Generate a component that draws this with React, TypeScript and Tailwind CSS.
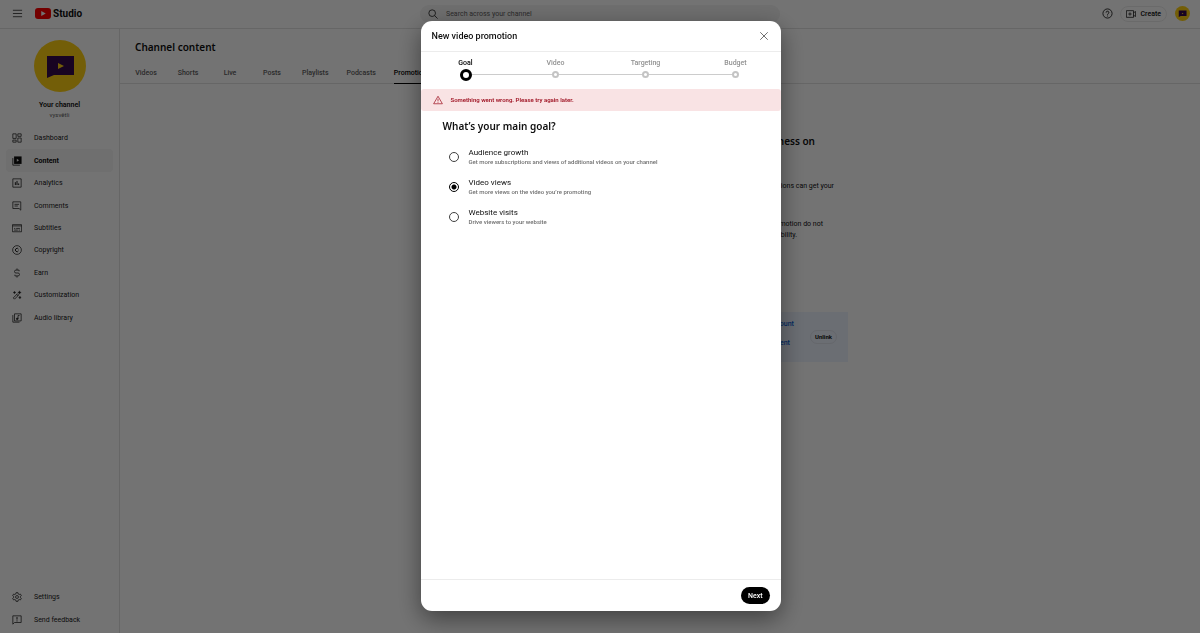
import { useState } from "react";
import type { ReactNode } from "react";

function Icon({ children, className = "size-[10px]" }: { children: ReactNode; className?: string }) {
  return (
    <svg viewBox="0 0 24 24" fill="none" stroke="currentColor" strokeWidth="1.8" className={`shrink-0 ${className}`} aria-hidden="true">
      {children}
    </svg>
  );
}

const navItems: { label: string; icon: ReactNode }[] = [
  {
    label: "Dashboard",
    icon: <path d="M2 2h8v11H2zM14 2h8v6h-8zM2 17h8v5H2zM14 12h8v10h-8z" />,
  },
  {
    label: "Content",
    icon: (
      <>
        <path d="M2 5v17h17" />
        <path d="M5 1h18v18H5z" fill="currentColor" stroke="none" />
        <path d="M11.500 6.500v7l5.500-3.500z" fill="#e8e8e8" stroke="none" />
      </>
    ),
  },
  {
    label: "Analytics",
    icon: (
      <>
        <path d="M2 2h20v20H2z" />
        <path d="M8 10v7M12 7v10M16 13v4" strokeWidth="2.400" />
      </>
    ),
  },
  {
    label: "Comments",
    icon: (
      <>
        <path d="M2 2h19v20l-4-4H2z" />
        <path d="M6 8h11M6 12h8" />
      </>
    ),
  },
  {
    label: "Subtitles",
    icon: (
      <>
        <path d="M1 4h22v17H1zM1 7h22" />
        <path d="M5 13h3M10 13h9M5 17h9M16 17h3" />
      </>
    ),
  },
  {
    label: "Copyright",
    icon: (
      <>
        <circle cx="12" cy="12" r="10.500" />
        <path d="M15.500 10a4 4 0 1 0 0 4" strokeWidth="2.400" />
      </>
    ),
  },
  {
    label: "Earn",
    icon: <path d="M17 8V5H9.500a3.500 3.500 0 0 0 0 7h5a3.500 3.500 0 0 1 0 7H7v-3M12 1v4M12 19v4" />,
  },
  {
    label: "Customization",
    icon: (
      <>
        <path d="M3 19 13 9l3 3L6 22zM11 11l3 3" />
        <path d="m18 2 1 3 3 1-3 1-1 3-1-3-3-1 3-1zM6 3l1 2 2 1-2 1-1 2-1-2-2-1 2-1zM19 15l1 2 2 1-2 1-1 2-1-2-2-1 2-1z" fill="currentColor" strokeWidth="1" />
      </>
    ),
  },
  {
    label: "Audio library",
    icon: (
      <>
        <path d="M6 2h16v17H6zM2 5v17h16" />
        <circle cx="12.500" cy="14" r="2" fill="currentColor" />
        <path d="M14.500 14V6H18" />
      </>
    ),
  },
];

const footerItems: { label: string; icon: ReactNode }[] = [
  {
    label: "Settings",
    icon: (
      <>
        <path d="M9.800 1.500h4.400l.7 3.300 2.100 1.200 3.200-1 2.200 3.800-2.500 2.200v2l2.500 2.200-2.200 3.800-3.200-1-2.100 1.200-.7 3.300H9.800l-.7-3.300L7 18l-3.200 1-2.200-3.800L4.100 13v-2L1.600 8.800 3.800 5 7 6l2.100-1.200z" />
        <circle cx="12" cy="12" r="3.500" />
      </>
    ),
  },
  {
    label: "Send feedback",
    icon: (
      <>
        <path d="M2 2h20v16H6l-4 4z" />
        <path d="M12 5v6M12 13v2.500" strokeWidth="2.400" />
      </>
    ),
  },
];

const tabs = ["Videos", "Shorts", "Live", "Posts", "Playlists", "Podcasts", "Promotions"];
const steps = ["Goal", "Video", "Targeting", "Budget"];
const goals = [
  { id: "audience", title: "Audience growth", text: "Get more subscriptions and views of additional videos on your channel" },
  { id: "views", title: "Video views", text: "Get more views on the video you’re promoting" },
  { id: "website", title: "Website visits", text: "Drive viewers to your website" },
];

function Avatar({ className }: { className: string }) {
  return (
    <svg viewBox="0 0 52 52" className={className} aria-hidden="true">
      <circle cx="26" cy="26" r="26" fill="#ffd013" />
      <path d="M13 16h27v19H20l-7 3z" fill="#350b4d" />
      <path d="M24 23v6l6-3z" fill="#ffd013" />
    </svg>
  );
}

function Header() {
  return (
    <header className="grid h-[29px] shrink-0 grid-cols-[1fr_360px_1fr] items-center border-b border-[#e2e2e2] pb-px">
      <div className="flex items-center pl-3">
        <button type="button" aria-label="Menu" className="text-[#303030]">
          <Icon className="size-[11px]">
            <path d="M2 5h20M2 12h20M2 19h20" />
          </Icon>
        </button>
        <a href="#studio" className="ml-3 flex items-center gap-[2px]">
          <svg viewBox="0 0 32 22" className="h-[11px] w-4" aria-hidden="true">
            <rect width="32" height="22" rx="6" fill="#ff0000" />
            <path d="M12.500 6v10l9-5z" fill="#fff" />
          </svg>
          <span className="text-[10px] leading-[14px] font-bold">Studio</span>
        </a>
      </div>
      <label className="flex h-[18px] items-center rounded-full bg-[#f3f3f3] pl-2">
        <Icon>
          <circle cx="10" cy="10" r="8" />
          <path d="m16 16 7 7" />
        </Icon>
        <input type="search" placeholder="Search across your channel" aria-label="Search across your channel" className="ml-2 min-w-0 flex-1 bg-transparent text-[7px] leading-[10px] outline-none placeholder:text-[#606060]" />
      </label>
      <div className="flex items-center justify-end pr-[10px]">
        <button type="button" aria-label="Help" className="mr-[7px]">
          <Icon className="size-[11px]">
            <circle cx="12" cy="12" r="10" />
            <path d="M9 10a3 3 0 1 1 4.500 2.500Q12 13.300 12 15M12 16.500v2" />
          </Icon>
        </button>
        <button type="button" className="mr-2 flex h-4 items-center gap-1 rounded-full border border-[#ececec] px-[5px] text-[7px] leading-[10px] font-medium">
          <Icon>
            <path d="M1 4h17v16H1zM18 9l5-3v12l-5-3M9.500 8v8M5.500 12h8" />
          </Icon>
          Create
        </button>
        <button type="button" aria-label="Account">
          <Avatar className="size-[15px]" />
        </button>
      </div>
    </header>
  );
}

function Sidebar() {
  return (
    <aside className="flex w-[120px] shrink-0 flex-col border-r border-[#e2e2e2] pt-[11px] pb-[2px]">
      <div className="flex flex-col items-center">
        <Avatar className="size-[52px]" />
        <p className="mt-2 text-[7px] leading-[10px] font-semibold">Your channel</p>
        <p className="text-[6px] leading-[10px] text-[#606060]">vysvětli</p>
      </div>
      <nav className="mt-[7px] grid h-[202px] auto-rows-fr px-[6px]">
        {navItems.map((item) => (
          <a
            key={item.label}
            href={`#${item.label}`}
            className={`flex items-center gap-3 rounded-sm pl-[6px] text-[7px] leading-[10px] ${item.label === "Content" ? "bg-[#f5f5f5] font-bold" : "text-[#202020]"}`}
          >
            <Icon>{item.icon}</Icon>
            {item.label}
          </a>
        ))}
      </nav>
      <nav className="mt-auto grid h-[45px] auto-rows-fr px-[6px]">
        {footerItems.map((item) => (
          <a key={item.label} href={`#${item.label}`} className="flex items-center gap-3 pl-[6px] text-[7px] leading-[10px] text-[#202020]">
            <Icon>{item.icon}</Icon>
            {item.label}
          </a>
        ))}
      </nav>
    </aside>
  );
}

function ChannelContent() {
  return (
    <main className="min-w-0 flex-1">
      <h1 className="pt-[10px] pl-[15px] font-['Noto_Sans',sans-serif] text-[10px] leading-4 font-semibold">Channel content</h1>
      <nav className="mt-2 flex border-b border-[#e2e2e2] pl-[5px]">
        {tabs.map((tab) => (
          <a
            key={tab}
            href={`#${tab}`}
            className={`flex min-w-[42px] justify-center px-[9px] text-[7px] leading-[20px] font-medium ${tab === "Promotions" ? "text-black" : "text-[#606060]"}`}
          >
            <span className={tab === "Promotions" ? "-mb-px border-b border-black" : ""}>{tab}</span>
          </a>
        ))}
      </nav>
      <section className="ml-[352px] w-[376px] pt-[49px] text-right text-[7px] leading-[11px]">
        <h2 className="pr-[33px] font-['Noto_Sans',sans-serif] text-[10px] leading-4 font-semibold">Promote your business on</h2>
        <p className="mt-8 pr-[14px]">Promotions can get your</p>
        <p className="mt-[27px] pr-[25px]">promotion do not</p>
        <p className="pr-[51px]">eligibility.</p>
        <div className="mt-[71px] flex h-[50px] items-center justify-end bg-[#edf3ff] pr-[11px]">
          <div className="mr-4 flex flex-col items-end gap-2 pb-[6px] font-medium text-[#065fd4]">
            <a href="#account">Account</a>
            <a href="#payment" className="pr-1">Payment</a>
          </div>
          <button type="button" className="h-[14px] rounded-full border border-[#dfe4ee] px-1 text-[6px] leading-[10px] font-bold">
            Unlink
          </button>
        </div>
      </section>
    </main>
  );
}

function Stepper() {
  return (
    <ol className="grid grid-cols-4 pt-[6px] pb-2 text-center text-[7px] leading-[10px] font-medium">
      {steps.map((step, i) => (
        <li key={step}>
          <span className={i === 0 ? "text-black" : "text-[#909090]"}>{step}</span>
          <div className="flex h-[13px] items-center">
            <span className={`h-px flex-1 ${i === 0 ? "" : "bg-[#cccccc]"}`} />
            {i === 0 ? (
              <span className="size-3 rounded-full border-3 border-black" />
            ) : (
              <span className="size-[7px] rounded-full border-2 border-[#c4c4c4]" />
            )}
            <span className={`h-px flex-1 ${i === steps.length - 1 ? "" : "bg-[#cccccc]"}`} />
          </div>
        </li>
      ))}
    </ol>
  );
}

function PromotionDialog() {
  const [goal, setGoal] = useState("views");
  return (
    <div className="fixed inset-0 z-10 flex justify-center bg-black/55 pt-[21px] pb-[22px] pl-px">
      <div role="dialog" aria-modal="true" aria-labelledby="dialog-title" className="flex w-[360px] flex-col overflow-hidden rounded-[11px] bg-white shadow-[0_8px_24px_rgba(0,0,0,0.45)]">
        <div className="flex h-[31px] shrink-0 items-center justify-between border-b border-[#ececec] pr-3 pl-[11px]">
          <h2 id="dialog-title" className="text-[9px] leading-3 font-medium">New video promotion</h2>
          <button type="button" aria-label="Close" className="text-[#404040]">
            <Icon>
              <path d="m3 3 18 18M21 3 3 21" />
            </Icon>
          </button>
        </div>
        <Stepper />
        <div role="alert" className="flex h-[22px] shrink-0 items-center gap-2 rounded-[3px] bg-[#f9e3e4] pl-3 text-[6px] leading-[10px] font-semibold text-[#a01525]">
          <Icon>
            <path d="M12 3 1.500 21h21zM12 9v6M12 16.500v2" />
          </Icon>
          Something went wrong. Please try again later.
        </div>
        <fieldset className="min-h-0 flex-1 px-[22px] pt-[7px]">
          <legend className="float-left w-full font-['Noto_Sans',sans-serif] text-[10px] leading-4 font-semibold">What’s your main goal?</legend>
          <div className="clear-both flex flex-col gap-3 pt-[14px]">
            {goals.map((g) => (
              <label key={g.id} className="flex items-center gap-[10px] pl-[6px]">
                <input
                  type="radio"
                  name="goal"
                  checked={goal === g.id}
                  onChange={() => setGoal(g.id)}
                  className="size-[10px] shrink-0 appearance-none rounded-full border border-[#404040] checked:border-black checked:bg-[radial-gradient(circle,#000_0_2px,#fff_3px)]"
                />
                <span className="flex flex-col">
                  <span className="text-[8px] leading-[9px]">{g.title}</span>
                  <span className="text-[6px] leading-[9px] font-medium text-[#707070]">{g.text}</span>
                </span>
              </label>
            ))}
          </div>
        </fieldset>
        <div className="flex h-8 shrink-0 items-center justify-end border-t border-[#ececec] pr-[11px]">
          <button type="button" className="h-[17px] rounded-full bg-black px-[7px] text-[7px] leading-[10px] font-medium text-white">
            Next
          </button>
        </div>
      </div>
    </div>
  );
}

export default function App() {
  return (
    <div className="flex min-h-screen flex-col bg-white font-[Roboto,sans-serif] text-[#0f0f0f]">
      <Header />
      <div className="flex flex-1">
        <Sidebar />
        <ChannelContent />
      </div>
      <PromotionDialog />
    </div>
  );
}
